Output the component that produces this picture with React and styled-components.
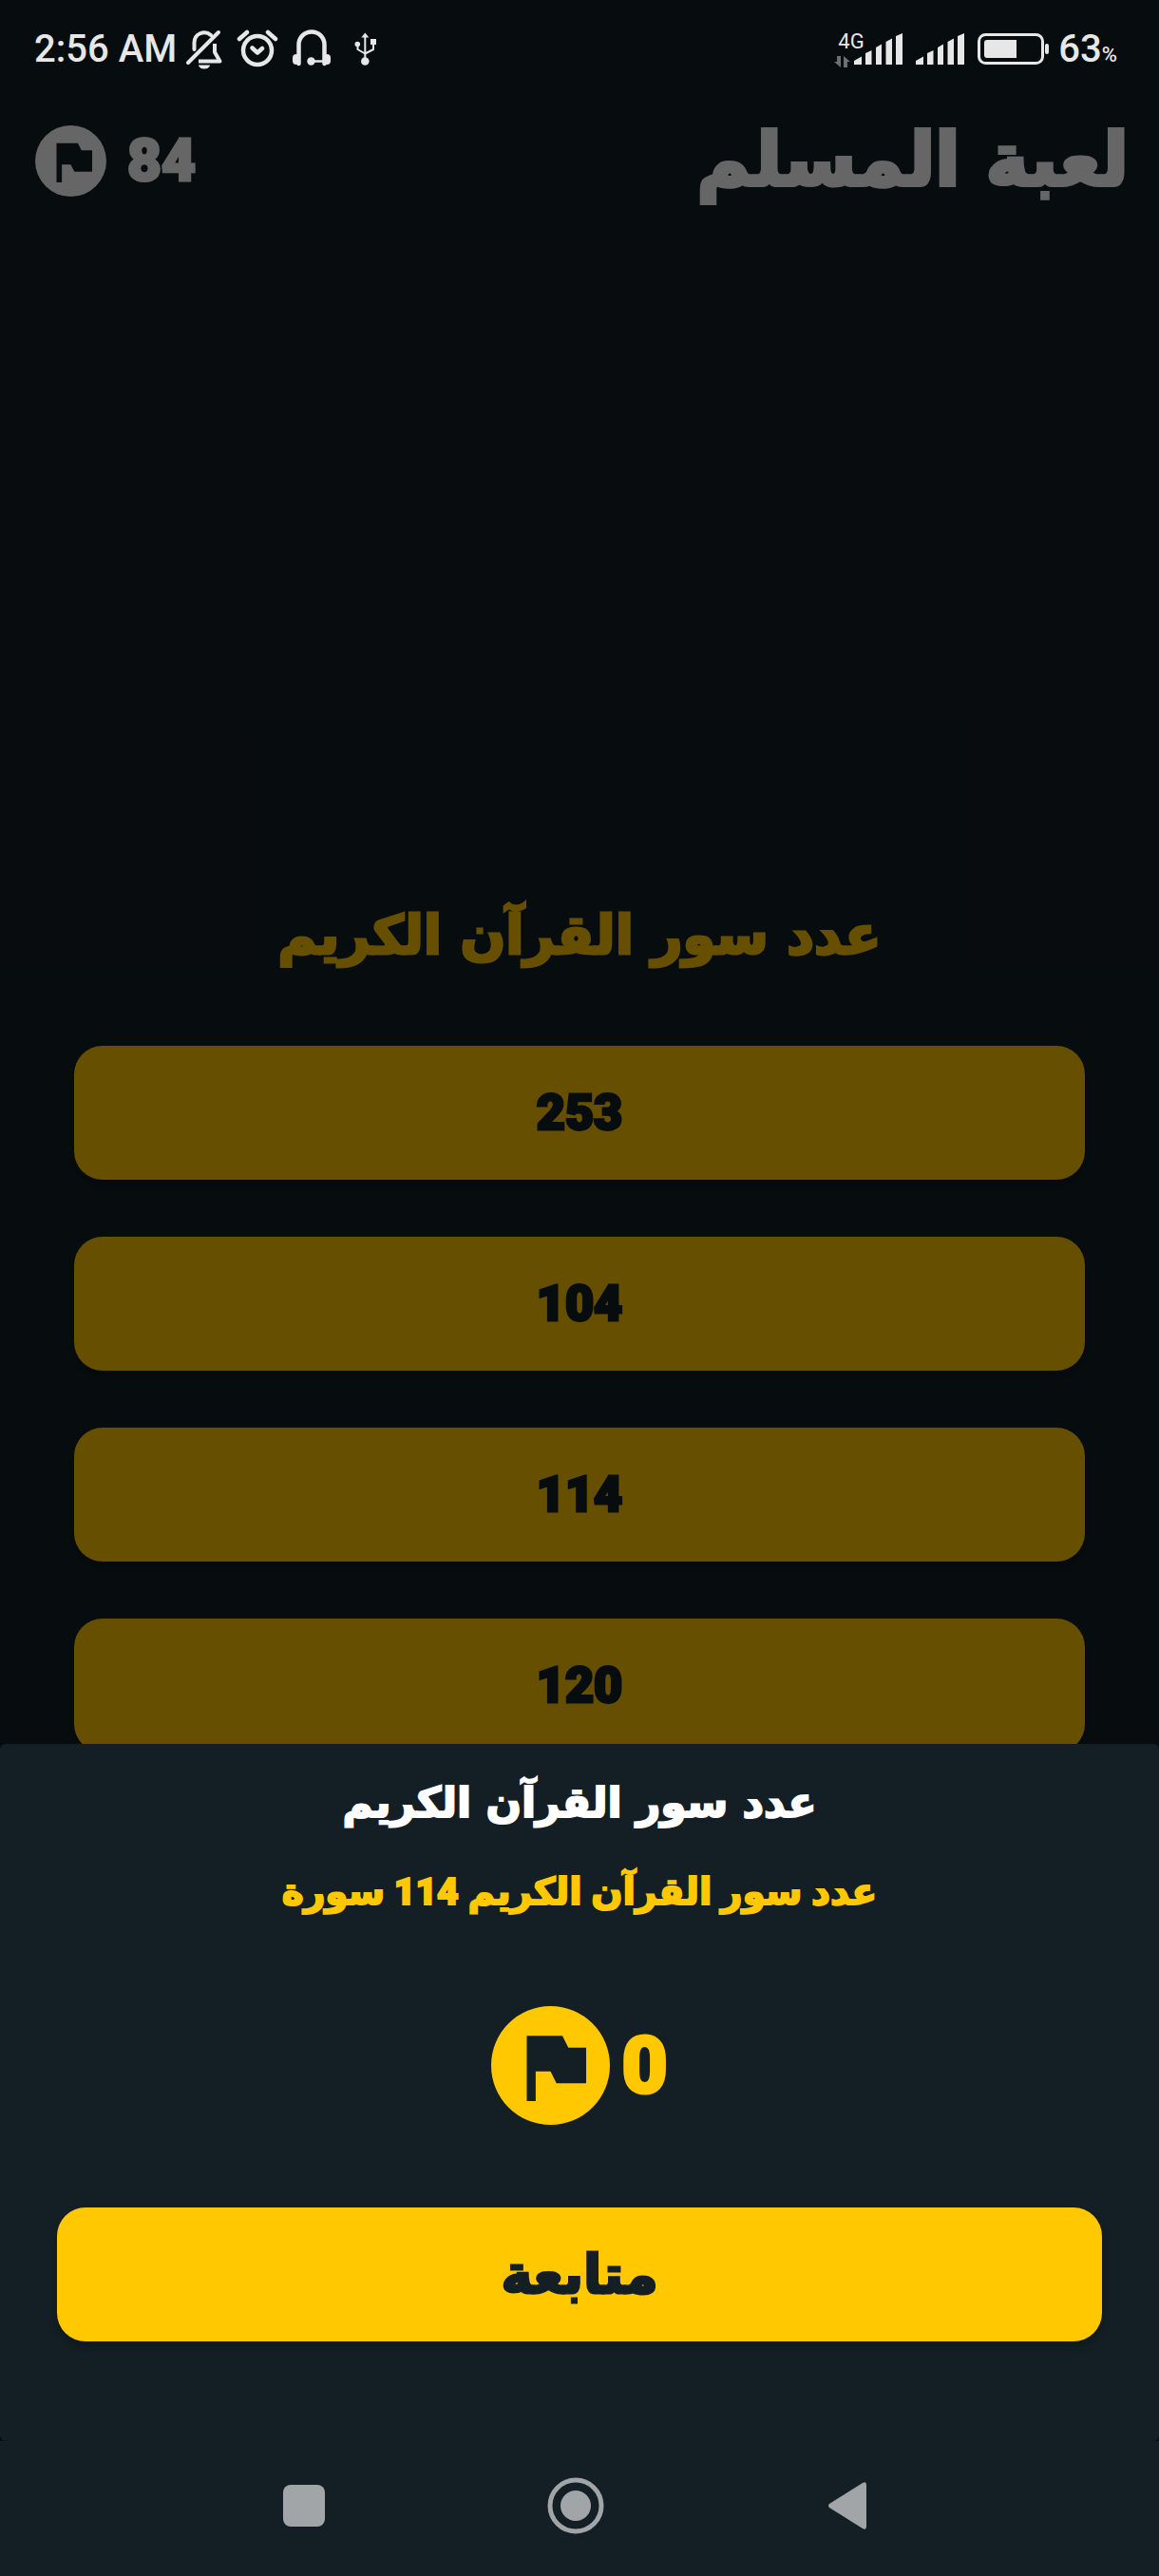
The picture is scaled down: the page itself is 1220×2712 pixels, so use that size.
import React from "react";
import styled, { createGlobalStyle } from "styled-components";

const colors = {
  surface: "#131f24",
  accent: "#ffc800",
  scrim: "rgba(0, 0, 0, 0.6)",
  status: "#e7e7e7",
  nav: "#a1a5a7",
};

const GlobalStyle = createGlobalStyle`
  *, *::before, *::after { box-sizing: border-box; }
  body { margin: 0; background: ${colors.surface}; }
`;

const Screen = styled.div`
  position: relative;
  display: flex;
  flex-direction: column;
  min-height: 100vh;
  overflow: hidden;
  background: ${colors.surface};
  font-family: Roboto, "DejaVu Sans", sans-serif;
`;

const StatusBar = styled.div`
  position: relative;
  z-index: 2;
  display: flex;
  justify-content: space-between;
  align-items: center;
  height: 104px;
  padding: 0 44px 0 36px;
  color: ${colors.status};
`;

const StatusGroup = styled.div`
  display: flex;
  align-items: center;
  gap: ${(p) => p.$gap}px;
`;

const StatusText = styled.span`
  font-size: 40px;
  line-height: 48px;
  font-weight: 500;
`;

const Percent = styled.span`
  font-size: 22px;
  line-height: 22px;
  font-weight: 500;
`;

const Network = styled.div`
  display: flex;
  flex-direction: column;
  gap: 4px;
  width: 20px;
  font-size: 22px;
  line-height: 22px;
  white-space: nowrap;
`;

const NetworkLabel = styled.span`
  padding-left: 4px;
`;

const Header = styled.header`
  display: flex;
  justify-content: space-between;
  align-items: center;
  height: 130px;
  padding: 0 32px 0 37px;
  color: #fff;
`;

const Score = styled.div`
  display: flex;
  align-items: center;
  gap: ${(p) => p.$gap}px;
  font-size: ${(p) => p.$size}px;
  line-height: 1;
  font-weight: 900;
  color: ${(p) => p.$color};
`;

const ScoreValue = styled.span`
  -webkit-text-stroke: 3px currentColor;
`;

const Title = styled.h1`
  margin: 0;
  font-family: "DejaVu Sans", sans-serif;
  font-size: 77px;
  line-height: 100px;
  font-weight: 700;
  -webkit-text-stroke: 4px currentColor;
`;

const Quiz = styled.main`
  flex: 1;
  display: flex;
  flex-direction: column;
  gap: 68px;
  padding: 702px 78px 0;
`;

const Question = styled.h2`
  margin: 0;
  font-family: "DejaVu Sans", sans-serif;
  font-size: 56px;
  line-height: 97px;
  font-weight: 700;
  text-align: center;
  color: ${colors.accent};
  -webkit-text-stroke: 3px currentColor;
`;

const Answers = styled.div`
  display: flex;
  flex-direction: column;
  gap: 60px;
`;

const BigButton = styled.button`
  width: 100%;
  height: 141px;
  padding: 0;
  border: 0;
  border-radius: 30px;
  background: ${colors.accent};
  color: ${colors.surface};
  font-family: Roboto, "DejaVu Sans", sans-serif;
  font-size: 52px;
  line-height: 80px;
  font-weight: 900;
  box-shadow: 0 6px 8px rgba(0, 0, 0, 0.2);
  -webkit-text-stroke: 3px currentColor;
`;

const ContinueButton = styled(BigButton)`
  margin-top: 87px;
  font-family: "DejaVu Sans", sans-serif;
  font-size: 56px;
`;

const Overlay = styled.div`
  position: absolute;
  inset: 0;
  display: flex;
  flex-direction: column;
  justify-content: flex-end;
  background: ${colors.scrim};
`;

const Sheet = styled.section`
  display: flex;
  flex-direction: column;
  align-items: center;
  padding: 22px 60px 105px;
  border-radius: 6px;
  background: ${colors.surface};
`;

const SheetTitle = styled.h3`
  margin: 0;
  font-family: "DejaVu Sans", sans-serif;
  font-size: 44px;
  line-height: 80px;
  font-weight: 700;
  text-align: center;
  color: #fff;
  -webkit-text-stroke: 2px currentColor;
`;

const SheetText = styled.p`
  margin: 14px 0 80px;
  font-family: Roboto, "DejaVu Sans", sans-serif;
  font-size: 39px;
  line-height: 80px;
  font-weight: 900;
  text-align: center;
  color: ${colors.accent};
  -webkit-text-stroke: 2px currentColor;
`;

const NavBar = styled.nav`
  display: grid;
  grid-template-columns: repeat(3, 286px);
  justify-content: center;
  align-items: center;
  height: 142px;
  padding: 0 8px 6px 0;
  background: ${colors.surface};
`;

const NavButton = styled.button`
  display: flex;
  justify-content: center;
  padding: 0;
  border: 0;
  background: none;
  color: ${colors.nav};
`;

function FlagBadge({ size }) {
  return (
    <svg width={size} height={size} viewBox="2 2 20 20" fill="currentColor" aria-hidden="true">
      <path
        fillRule="evenodd"
        d="M12 2a10 10 0 1 0 0 20 10 10 0 0 0 0-20zM18 15h-5l-1-2H9.500v5H8V7h6l1 2h3v6z"
      />
    </svg>
  );
}

const lineProps = { fill: "none", stroke: "currentColor", strokeLinecap: "round", strokeLinejoin: "round" };

function MutedBell() {
  return (
    <svg width="40" height="44" viewBox="0 0 40 44" aria-hidden="true">
      <g {...lineProps} strokeWidth="4">
        <path d="M3 36 35 4M9.500 22V15a10.500 10.500 0 0 1 17.500-8" />
        <path d="M31 16v9l5.500 9.500H14" strokeLinecap="butt" />
      </g>
      <path d="M14 38.500h12a6 4 0 0 1-12 0z" fill="currentColor" />
    </svg>
  );
}

function Alarm() {
  return (
    <svg width="44" height="44" viewBox="0 0 44 44" aria-hidden="true">
      <g {...lineProps} strokeWidth="4.500">
        <circle cx="22" cy="23" r="15" />
        <path d="m16.500 20.500 5.500 5 5-4.500M3 11l8-7M33 4l8 7" />
      </g>
    </svg>
  );
}

function Headphones() {
  return (
    <svg width="42" height="44" viewBox="0 0 42 44" aria-hidden="true">
      <g {...lineProps} strokeWidth="4.500">
        <path d="M7.500 37V17a13.500 13.500 0 0 1 27 0v20" />
        <path d="M20 34.500h14" strokeWidth="2.500" />
      </g>
      <g fill="currentColor">
        <rect x="1" y="27" width="8" height="11" rx="4" />
        <rect x="33" y="27" width="8" height="11" rx="4" />
        <circle cx="20.500" cy="34.500" r="4.200" />
      </g>
    </svg>
  );
}

function Usb() {
  return (
    <svg width="42" height="44" viewBox="0 0 42 44" aria-hidden="true">
      <path d="M21.300 8v26M13.500 16v6l7.800 4.500M30 15v7l-8.700 4.500" {...lineProps} strokeWidth="2" />
      <g fill="currentColor">
        <path d="M17.300 9.500 21.300 4.500l4 5z" />
        <circle cx="21.300" cy="34.500" r="4.300" />
        <circle cx="13.300" cy="16.500" r="2.800" />
        <rect x="27" y="11" width="6" height="6" />
      </g>
    </svg>
  );
}

function Signal() {
  return (
    <svg width="51" height="34" viewBox="0 0 51 34" fill="currentColor" aria-hidden="true">
      <path d="M0 29 8 24.500V33H0zM12 21l6.500-3V33H12zM23 15l6-3.500V33h-6zM33.500 9 40 5.500V33h-6.500zM44 3l7-3v33h-7z" />
    </svg>
  );
}

function Battery() {
  return (
    <svg width="76" height="34" viewBox="0 0 76 34" aria-hidden="true">
      <rect x="1.500" y="1.500" width="67" height="30" rx="7" fill="none" stroke="currentColor" strokeWidth="3" />
      <path d="M10 7H41V26H10a3 3 0 0 1-3-3V10a3 3 0 0 1 3-3z" fill="currentColor" />
      <rect x="71" y="11" width="4" height="11" rx="2" fill="currentColor" />
    </svg>
  );
}

function DataArrows() {
  return (
    <svg width="17" height="12" viewBox="0 0 17 12" fill="#6c6f70" aria-hidden="true">
      <path d="M3 0h4v12L0 6h3zM10 0l7 6h-3v6h-4z" />
    </svg>
  );
}

const answers = ["253", "104", "114", "120"];

export default function App() {
  return (
    <Screen>
      <GlobalStyle />
      <StatusBar>
        <StatusGroup $gap={9}>
          <StatusText>2:56 AM</StatusText>
          <StatusGroup $gap={14}>
            <MutedBell />
            <Alarm />
            <Headphones />
            <Usb />
          </StatusGroup>
        </StatusGroup>
        <StatusGroup $gap={9}>
          <StatusGroup $gap={14}>
            <StatusGroup $gap={1}>
              <Network>
                <NetworkLabel>4G</NetworkLabel>
                <DataArrows />
              </Network>
              <Signal />
            </StatusGroup>
            <Signal />
            <Battery />
          </StatusGroup>
          <StatusText>
            63<Percent>%</Percent>
          </StatusText>
        </StatusGroup>
      </StatusBar>

      <Header>
        <Score $gap={22} $size={62} $color="#fff">
          <FlagBadge size={75} />
          <ScoreValue>84</ScoreValue>
        </Score>
        <Title dir="rtl" lang="ar">لعبة المسلم</Title>
      </Header>

      <Quiz>
        <Question dir="rtl" lang="ar">عدد سور القرآن الكريم</Question>
        <Answers>
          {answers.map((value) => (
            <BigButton key={value} type="button">{value}</BigButton>
          ))}
        </Answers>
      </Quiz>

      <Overlay>
        <Sheet role="dialog" aria-modal="true" aria-labelledby="sheet-title">
          <SheetTitle id="sheet-title" dir="rtl" lang="ar">عدد سور القرآن الكريم</SheetTitle>
          <SheetText dir="rtl" lang="ar">عدد سور القرآن الكريم 114 سورة</SheetText>
          <Score $gap={12} $size={84} $color={colors.accent}>
            <FlagBadge size={125} />
            <ScoreValue>0</ScoreValue>
          </Score>
          <ContinueButton type="button" dir="rtl" lang="ar">متابعة</ContinueButton>
        </Sheet>
        <NavBar>
          <NavButton type="button" aria-label="Recent apps">
            <svg width="44" height="44" viewBox="0 0 44 44" fill="currentColor">
              <rect width="44" height="44" rx="8" />
            </svg>
          </NavButton>
          <NavButton type="button" aria-label="Home">
            <svg width="60" height="60" viewBox="0 0 60 60" fill="currentColor">
              <circle cx="30" cy="30" r="27" fill="none" stroke="currentColor" strokeWidth="5" />
              <circle cx="30" cy="30" r="16" />
            </svg>
          </NavButton>
          <NavButton type="button" aria-label="Back">
            <svg width="40" height="50" viewBox="0 0 40 50" fill="currentColor">
              <path d="M1 23 36 1q4-2 4 2v44q0 4-4 2L1 27q-2-2 0-4z" />
            </svg>
          </NavButton>
        </NavBar>
      </Overlay>
    </Screen>
  );
}
